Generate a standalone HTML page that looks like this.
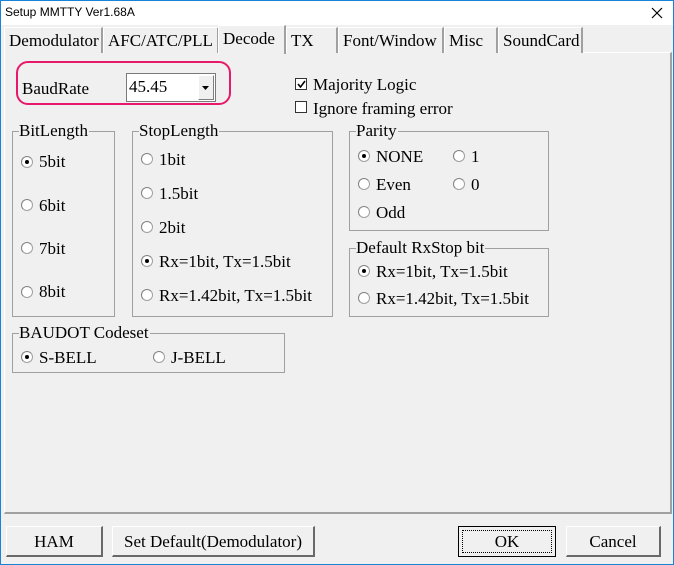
<!DOCTYPE html>
<html><head><style>
*{margin:0;padding:0;box-sizing:border-box}
body{width:674px;height:565px;background:#f0f0f0;position:relative;overflow:hidden;font-family:"Liberation Serif",serif;font-size:17px;color:#000}
.a{position:absolute;white-space:nowrap}
.win{position:absolute;left:0;top:0;width:674px;height:565px;border:1px solid #1883d7;}
.title{position:absolute;left:1px;top:1px;width:672px;height:24px;background:#fff}
.tab{position:absolute;top:27px;height:26px;border:1px solid #fff;border-right:2px solid #a0a0a0;border-bottom:none;background:#f0f0f0;padding:3px 0 0 4px;font-size:17px;white-space:nowrap}
.panel{position:absolute;left:4px;top:52px;width:668px;height:462px;border-top:1px solid #fff;border-left:1px solid #fff;border-right:2px solid #a0a0a0;border-bottom:2px solid #a0a0a0}
.grp{position:absolute;border:1px solid #a0a0a0;}
.grp>span{position:absolute;top:-11px;left:6px;background:#f0f0f0;line-height:19px;padding-right:1px}
.r{position:absolute;width:12px;height:12px;border-radius:50%;border:1px solid #a0a0a0;background:#fff;border-top-color:#808080;border-left-color:#808080}
.r.on::after{content:"";position:absolute;left:3px;top:3px;width:4px;height:4px;border-radius:50%;background:#000}
.btn{position:absolute;height:31px;border:1px solid #fff;border-right:2px solid #696969;border-bottom:2px solid #696969;background:#f0f0f0;text-align:center;line-height:29px;font-size:17px}
</style></head><body>
<div class="win"></div>
<div class="title"></div>
<div class="a" style="left:5px;top:5px;font-family:'Liberation Sans',sans-serif;font-size:12px">Setup MMTTY Ver1.68A</div>
<svg class="a" style="left:651px;top:7px" width="12" height="12"><path d="M1 1L11 11M11 1L1 11" stroke="#000" stroke-width="1.2"/></svg>

<div class="panel"></div>
<div class="tab" style="left:4px;width:99px">Demodulator</div>
<div class="tab" style="left:103px;width:116px">AFC/ATC/PLL</div>
<div class="tab" style="left:286px;width:52px">TX</div>
<div class="tab" style="left:338px;width:106px">Font/Window</div>
<div class="tab" style="left:444px;width:54px">Misc</div>
<div class="tab" style="left:498px;width:85px">SoundCard</div>
<div class="tab" style="left:218px;top:25px;height:29px;width:68px;border-bottom:none;z-index:2;padding-top:3px">Decode</div>

<div class="a" style="left:16px;top:61px;width:215px;height:44px;border:2px solid #e6196a;border-radius:12px"></div>
<div class="a" style="left:22px;top:79px">BaudRate</div>
<div class="a" style="left:126px;top:73px;width:90px;height:29px;border:1px solid #7a7a7a;background:#fff"></div>
<div class="a" style="left:129px;top:77px">45.45</div>
<div class="a" style="left:198px;top:75px;width:16px;height:25px;background:#f0f0f0;border:1px solid #fff;border-right-color:#808080;border-bottom-color:#808080"></div>
<svg class="a" style="left:202px;top:86px" width="8" height="5"><path d="M0 0H7L3.5 4Z" fill="#000"/></svg>

<div class="a" style="left:295px;top:78px;width:12px;height:12px;border:1px solid #333;background:#fff"></div>
<svg class="a" style="left:297px;top:80px" width="9" height="9"><path d="M1 4L3.5 7L8 1" stroke="#000" stroke-width="1.6" fill="none"/></svg>
<div class="a" style="left:313px;top:75px">Majority Logic</div>
<div class="a" style="left:295px;top:101px;width:12px;height:12px;border:1px solid #333;background:#fff"></div>
<div class="a" style="left:313px;top:99px">Ignore framing error</div>

<div class="grp" style="left:12px;top:131px;width:103px;height:186px"><span>BitLength</span></div>
<div class="r on" style="left:21px;top:156px"></div><div class="a" style="left:39px;top:152px">5bit</div>
<div class="r" style="left:21px;top:199px"></div><div class="a" style="left:39px;top:196px">6bit</div>
<div class="r" style="left:21px;top:242px"></div><div class="a" style="left:39px;top:239px">7bit</div>
<div class="r" style="left:21px;top:286px"></div><div class="a" style="left:39px;top:282px">8bit</div>

<div class="grp" style="left:132px;top:131px;width:201px;height:186px"><span>StopLength</span></div>
<div class="r" style="left:141px;top:153px"></div><div class="a" style="left:159px;top:150px">1bit</div>
<div class="r" style="left:141px;top:187px"></div><div class="a" style="left:159px;top:184px">1.5bit</div>
<div class="r" style="left:141px;top:221px"></div><div class="a" style="left:159px;top:218px">2bit</div>
<div class="r on" style="left:141px;top:255px"></div><div class="a" style="left:159px;top:252px">Rx=1bit, Tx=1.5bit</div>
<div class="r" style="left:141px;top:289px"></div><div class="a" style="left:159px;top:286px">Rx=1.42bit, Tx=1.5bit</div>

<div class="grp" style="left:349px;top:131px;width:200px;height:100px"><span>Parity</span></div>
<div class="r on" style="left:358px;top:150px"></div><div class="a" style="left:376px;top:147px">NONE</div>
<div class="r" style="left:453px;top:150px"></div><div class="a" style="left:471px;top:147px">1</div>
<div class="r" style="left:358px;top:178px"></div><div class="a" style="left:376px;top:175px">Even</div>
<div class="r" style="left:453px;top:178px"></div><div class="a" style="left:471px;top:175px">0</div>
<div class="r" style="left:358px;top:206px"></div><div class="a" style="left:376px;top:203px">Odd</div>

<div class="grp" style="left:349px;top:248px;width:200px;height:69px"><span>Default RxStop bit</span></div>
<div class="r on" style="left:358px;top:265px"></div><div class="a" style="left:376px;top:262px">Rx=1bit, Tx=1.5bit</div>
<div class="r" style="left:358px;top:292px"></div><div class="a" style="left:376px;top:289px">Rx=1.42bit, Tx=1.5bit</div>

<div class="grp" style="left:12px;top:333px;width:273px;height:40px"><span>BAUDOT Codeset</span></div>
<div class="r on" style="left:21px;top:351px"></div><div class="a" style="left:39px;top:348px">S-BELL</div>
<div class="r" style="left:153px;top:351px"></div><div class="a" style="left:171px;top:348px">J-BELL</div>

<div class="btn" style="left:6px;top:526px;width:97px">HAM</div>
<div class="btn" style="left:112px;top:526px;width:203px">Set Default(Demodulator)</div>
<div class="btn" style="left:458px;top:526px;width:98px;border:1px solid #000"><div style="position:absolute;left:3px;top:3px;right:3px;bottom:3px;border:1px dotted #000"></div><span style="position:relative">OK</span></div>
<div class="btn" style="left:566px;top:526px;width:95px">Cancel</div>
</body></html>
